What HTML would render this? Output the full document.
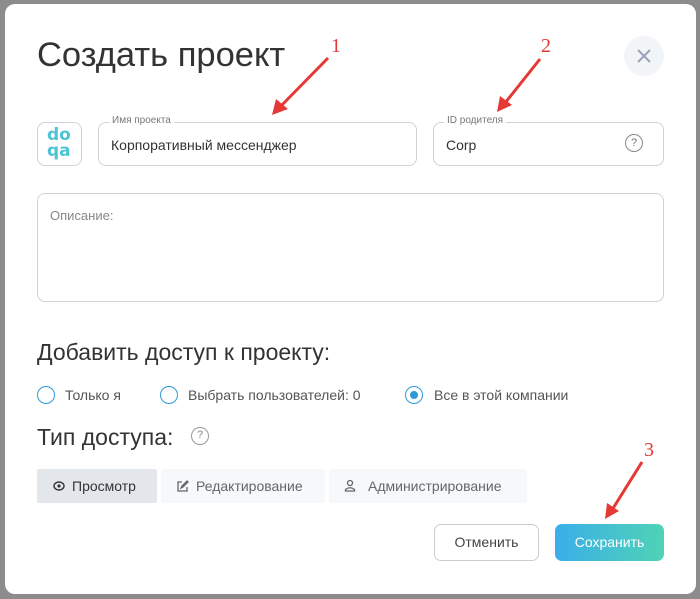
<!DOCTYPE html>
<html><head><meta charset="utf-8"><style>
body{margin:0;width:700px;height:599px;background:#8c8c8c;font-family:"Liberation Sans",sans-serif;position:relative;overflow:hidden}
.dlg{position:absolute;left:5px;top:4px;width:691px;height:590px;background:#fff;border-radius:10px}
.a{position:absolute}
.inp{position:absolute;border:1px solid #cfd3d8;border-radius:8px;box-sizing:border-box}
.lbl{position:absolute;top:-8px;left:10px;background:#fff;padding:0 3px;font-size:10px;color:#777}
.val{position:absolute;left:12px;top:14px;font-size:14px;color:#333}
.radio{position:absolute;width:18px;height:18px;border:1.5px solid #2c9ad8;border-radius:50%;box-sizing:border-box}
.rt{position:absolute;font-size:14px;color:#555}
.tab{position:absolute;top:469px;height:34px;background:#f6f8fa;border-radius:2px;font-size:14px;color:#666;line-height:34px}
</style></head><body>
<div class="dlg"></div>
<div class="a" style="left:37px;top:36px;font-size:34.5px;color:#333">Создать проект</div>
<div class="a" style="left:624px;top:36px;width:40px;height:40px;border-radius:50%;background:#f2f5f8"></div>
<svg class="a" style="left:636px;top:48px" width="16" height="16"><path d="M2 2L14 14M14 2L2 14" stroke="#9aa3b5" stroke-width="2"/></svg>
<div class="inp" style="left:37px;top:122px;width:45px;height:44px"></div>
<div class="a" style="left:47px;top:127px;font-size:17px;font-weight:bold;color:#4cc3d6;line-height:16px;letter-spacing:0px;font-family:'DejaVu Sans',sans-serif">do<br>qa</div>
<div class="inp" style="left:98px;top:122px;width:319px;height:44px"><span class="lbl">Имя проекта</span><span class="val">Корпоративный мессенджер</span></div>
<div class="inp" style="left:433px;top:122px;width:231px;height:44px"><span class="lbl">ID родителя</span><span class="val">Corp</span>
<div class="a" style="left:191px;top:11px;width:16px;height:16px;border:1.5px solid #888;border-radius:50%;font-size:11px;color:#777;text-align:center;line-height:16px">?</div></div>
<div class="inp" style="left:37px;top:193px;width:627px;height:109px"><span class="val" style="top:14px;font-size:13px;color:#888">Описание:</span></div>
<div class="a" style="left:37px;top:339px;font-size:23px;color:#333">Добавить доступ к проекту:</div>
<div class="radio" style="left:37px;top:386px"></div><div class="rt" style="left:65px;top:387px">Только я</div>
<div class="radio" style="left:160px;top:386px"></div><div class="rt" style="left:188px;top:387px">Выбрать пользователей: 0</div>
<div class="radio" style="left:405px;top:386px"><div class="a" style="left:3.5px;top:3.5px;width:8px;height:8px;border-radius:50%;background:#2c9ad8"></div></div><div class="rt" style="left:434px;top:387px">Все в этой компании</div>
<div class="a" style="left:37px;top:424px;font-size:23px;color:#333">Тип доступа:</div>
<div class="a" style="left:191px;top:427px;width:18px;height:18px;border:1.5px solid #999;border-radius:50%;box-sizing:border-box;font-size:11px;color:#888;text-align:center;line-height:15px">?</div>
<div class="tab" style="left:37px;width:120px;background:#e3e7eb;color:#333"><span style="padding-left:35px">Просмотр</span>
<svg class="a" style="left:16px;top:12px" width="12" height="10"><ellipse cx="6" cy="5" rx="5" ry="4" fill="none" stroke="#333" stroke-width="1.4"/><circle cx="6" cy="5" r="1.6" fill="#333"/></svg></div>
<div class="tab" style="left:161px;width:164px"><span style="padding-left:35px">Редактирование</span>
<svg class="a" style="left:15px;top:11px" width="13" height="13"><path d="M6 2H2V11H11V7M5 8L6 6L11 1L12 2L7 7Z" fill="none" stroke="#666" stroke-width="1.3"/></svg></div>
<div class="tab" style="left:329px;width:198px"><span style="padding-left:39px">Администрирование</span>
<svg class="a" style="left:15px;top:10px" width="12" height="13"><circle cx="6" cy="4" r="2.5" fill="none" stroke="#666" stroke-width="1.3"/><path d="M1.5 12V10.5Q6 7 10.5 10.5V12Z" fill="none" stroke="#666" stroke-width="1.3"/></svg></div>
<div class="a" style="left:434px;top:524px;width:105px;height:37px;border:1px solid #ccc;border-radius:7px;box-sizing:border-box;text-align:center;line-height:35px;font-size:14px;color:#444">Отменить</div>
<div class="a" style="left:555px;top:524px;width:109px;height:37px;border-radius:7px;background:linear-gradient(90deg,#3aaee9,#4fd3b6);text-align:center;line-height:37px;font-size:14px;color:#fff">Сохранить</div>
<svg class="a" style="left:0;top:0" width="700" height="599">
<g stroke="#e53935" stroke-width="3" fill="#e53935">
<line x1="328" y1="58" x2="280" y2="107"/><polygon points="272,115 276,99 288,109" stroke="none"/>
<line x1="540" y1="59" x2="505" y2="103"/><polygon points="497,112 500,96 512,105" stroke="none"/>
<line x1="642" y1="462" x2="612" y2="510"/><polygon points="605,519 607,503 619,511" stroke="none"/>
</g>
<g fill="#e53935" font-family="Liberation Serif,serif" font-size="20"><text x="331" y="52">1</text><text x="541" y="52">2</text><text x="644" y="456">3</text></g>
</svg>
</body></html>
